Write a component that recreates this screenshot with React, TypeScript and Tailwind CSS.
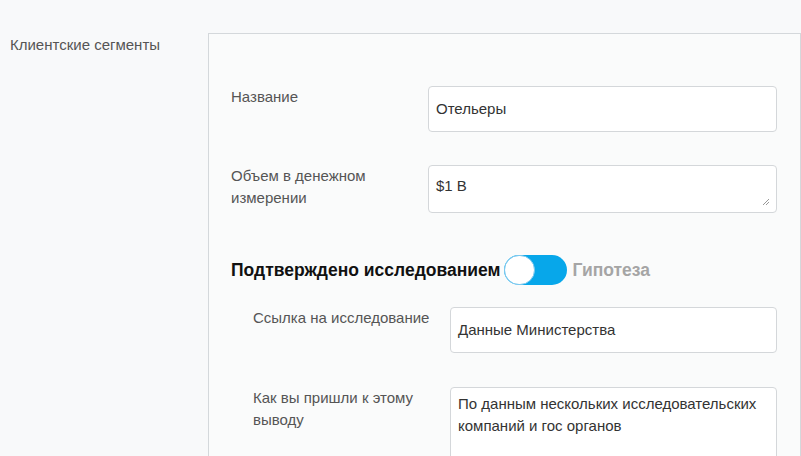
import React from "react";

function Field({
  label,
  value,
  area,
  height,
  padTop,
}: {
  label: React.ReactNode;
  value: string;
  area?: boolean;
  height: string;
  padTop: string;
}) {
  return (
    <div className="flex">
      <div className="w-[197px] shrink-0 text-[15px] leading-[22px] text-[#555]">{label}</div>
      <div
        className={`relative w-[349px] ${height} ${padTop} px-[7px] rounded-[4px] border border-[#d4d7da] bg-white text-[15px] leading-[22px] text-[#333]`}
      >
        {value}
        {area && (
          <svg className="absolute right-[6px] bottom-[6px]" width="8" height="8" viewBox="0 0 8 8">
            <path d="M7 1L1 7M7 4L4 7" stroke="#999" strokeWidth="1" />
          </svg>
        )}
      </div>
    </div>
  );
}

export default function App() {
  return (
    <div
      className="min-h-[456px] h-[456px] overflow-hidden bg-[#f8f9fa] flex pt-[33px]"
      style={{ fontFamily: '"Liberation Sans", Arial, sans-serif' }}
    >
      <div className="w-[208px] shrink-0 pl-[10px] pt-[1px] text-[15px] leading-[22px] text-[#555]">
        Клиентские сегменты
      </div>
      <div className="flex-1 border-l border-t border-r border-[#d4d8db] bg-[#fafbfb] pl-[22px] pt-[52px] pr-[22px]">
        <Field label="Название" value="Отельеры" height="h-[46px]" padTop="pt-[11px]" />
        <div className="h-[33px]" />
        <Field
          label={
            <>
              Объем в денежном
              <br />
              измерении
            </>
          }
          value="$1 B"
          area
          height="h-[48px]"
          padTop="pt-[9px]"
        />
        <div className="flex items-center h-[30px] mt-[42px]">
          <span className="text-[17.5px] font-bold text-[#111]">Подтверждено исследованием</span>
          <div className="relative ml-[4px] w-[63px] h-[30px] rounded-full bg-[#07a7ea]">
            <div className="absolute left-0 top-0 w-[31px] h-[30px] rounded-full bg-white border border-[#7cc8ef]" />
          </div>
          <span className="ml-[5px] text-[17.5px] font-bold text-[#a5a5a5]">Гипотеза</span>
        </div>
        <div className="pl-[22px] mt-[22px]">
          <div className="flex">
            <div className="w-[197px] shrink-0 text-[15px] leading-[22px] text-[#555]">Ссылка на исследование</div>
            <div className="w-[327px] h-[46px] pt-[11px] px-[7px] rounded-[4px] border border-[#d4d7da] bg-white text-[15px] leading-[22px] text-[#333]">
              Данные Министерства
            </div>
          </div>
          <div className="flex mt-[34px]">
            <div className="w-[197px] shrink-0 text-[15px] leading-[22px] text-[#555]">
              Как вы пришли к этому
              <br />
              выводу
            </div>
            <div className="w-[327px] h-[90px] pt-[5px] px-[7px] rounded-[4px] border border-[#d4d7da] bg-white text-[15px] leading-[22px] text-[#333]">
              По данным нескольких исследовательских компаний и гос органов
            </div>
          </div>
        </div>
      </div>
    </div>
  );
}
